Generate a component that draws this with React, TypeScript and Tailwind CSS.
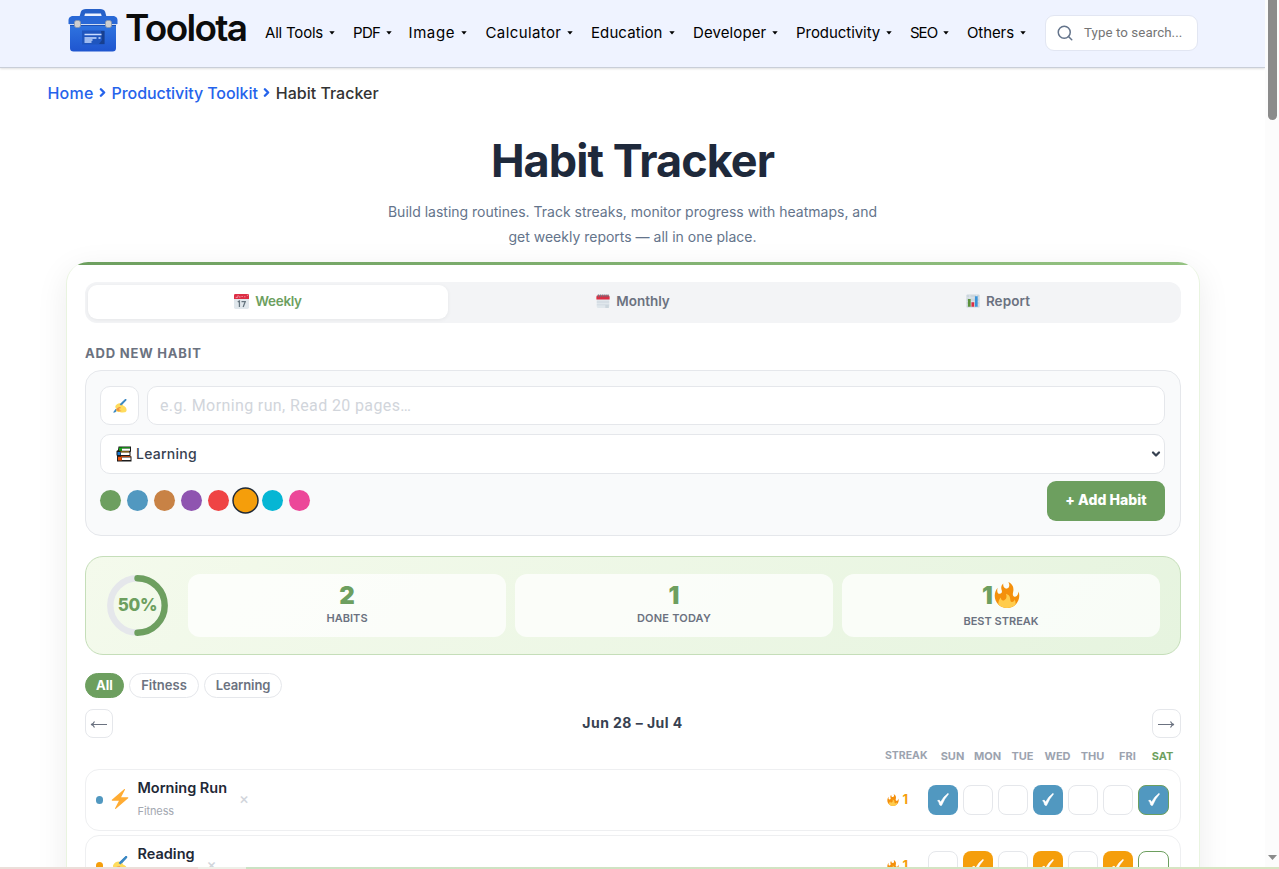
import type { ReactNode } from "react";
import { ChevronRight, ChevronDown, Search } from "lucide-react";

const Fire = ({ className }: { className: string }) => (
  <svg viewBox="0 0 36 36" className={className}>
    <path fill="#F4900C" d="M35 19c0-2.062-.367-4.039-1.04-5.868-.46 5.389-3.333 8.157-6.335 6.868-2.812-1.208-.917-5.917-.777-8.164.236-3.809-.012-8.169-6.931-11.794 2.875 5.5.333 8.917-2.333 9.125-2.958.231-5.667-2.542-4.667-7.042-3.238 2.386-3.332 6.402-2.333 9 1.042 2.708-.042 4.958-2.583 5.208-2.84.28-4.418-3.041-2.963-8.333C2.52 10.965 1 14.805 1 19c0 9.389 7.611 17 17 17s17-7.611 17-17z" />
    <path fill="#FFCC4D" d="M28.394 23.999c.148 3.084-2.561 4.293-4.019 3.709-2.106-.843-1.541-2.291-2.083-5.291s-2.625-5.083-5.708-6c2.25 6.333-1.247 8.667-3.08 9.084-1.872.426-3.753-.001-3.968-4.007C7.352 23.668 6 26.676 6 30c0 .368.023.73.055 1.09C9.125 34.124 13.342 36 18 36s8.875-1.876 11.945-4.91c.032-.36.055-.722.055-1.09 0-2.187-.584-4.236-1.606-6.001z" />
  </svg>
);

const Bolt = ({ className }: { className: string }) => (
  <svg viewBox="0 0 36 36" className={className}>
    <path fill="#FFAC33" d="M32.938 15.651C32.792 15.26 32.418 15 32 15H19.925L26.89 1.458c.219-.426.106-.947-.271-1.243C26.437.071 26.218 0 26 0c-.233 0-.466.082-.653.243L18 6.588 3.347 19.243c-.316.273-.43.714-.284 1.105S3.582 21 4 21h12.075L9.11 34.542c-.219.426-.106.947.271 1.243.182.144.401.215.619.215.233 0 .466-.082.653-.243L18 29.412l14.653-12.655c.317-.273.43-.714.285-1.106z" />
  </svg>
);

const Writing = ({ className }: { className: string }) => (
  <svg viewBox="0 0 36 36" className={className}>
    <path fill="#3B88C3" d="M7 25l5 4-7 6H0z" />
    <path fill="#3B88C3" d="M31 .5c2-1.500 4.500 1 3 3L17 22l-4-4z" />
    <path fill="#FFDC5D" d="M7 17c3-5 9-8 14-5 3 1 4 3 5 5 5 2 9 6 9 11 0 4-3 6-6 6-5 1-13 1-17-1-4-1-5-5-3-8-3-2-4-5-2-8z" />
    <path fill="#EF9645" d="M9 25c4-4 8-5 12-4-3 1-5 2-6 4 3 0 6 0 7 1-4 0-6 1-7 3 3 0 6 1 7 2-4 1-8 1-11-1-3-1-4-3-2-5z" />
    <path fill="#3B88C3" d="M31 .5c2-1.500 4.500 1 3 3L21 17l-4-3z" />
  </svg>
);

const CalendarDay = () => (
  <svg viewBox="0 0 36 36" className="size-[15px]">
    <path fill="#E0E7EC" d="M36 32a4 4 0 0 1-4 4H4a4 4 0 0 1-4-4V9h36z" />
    <path fill="#DD2E44" d="M0 12V3a3 3 0 0 1 3-3h30a3 3 0 0 1 3 3v9z" />
    <path fill="none" stroke="#F4ABBA" strokeWidth="2" d="M4 8h5l1-5M14 5v4M18 6h3M26 5v3M31 3h3" />
    <path fill="none" stroke="#66757F" strokeWidth="3" d="M9 19l4-2v14M18 18h9l-5 13" />
  </svg>
);

const CalendarPad = () => (
  <svg viewBox="0 0 36 36" className="size-[14px]">
    <path fill="#E0E7EC" d="M2 8h32v24a4 4 0 0 1-4 4H6a4 4 0 0 1-4-4z" />
    <path fill="#CCD6DD" d="M2 19h32v3H2zM2 27h32v2H2zM24 29h9v7h-9z" />
    <path fill="#DD2E44" d="M1 14V7a4 4 0 0 1 4-4h26a4 4 0 0 1 4 4v7z" />
    <path stroke="#66757F" strokeWidth="2.5" d="M6 1v7M11 1v7M16 1v7M21 1v7M26 1v7M31 1v7" />
  </svg>
);

const BarChart = () => (
  <svg viewBox="0 0 36 36" className="size-[14px]">
    <rect width="34" height="34" x="1" y="1" rx="3" fill="#CCD6DD" />
    <path stroke="#E1E8ED" strokeWidth="2" d="M1 10h34M1 19h34M1 28h34M10 1v34M27 1v34" />
    <path fill="#5C913B" d="M5 13h7v20H5z" />
    <path fill="#DD2E44" d="M14 21h7v12h-7z" />
    <path fill="#3B94D9" d="M23 6h7v27h-7z" />
  </svg>
);

const Books = () => (
  <svg viewBox="0 0 16 16" className="size-4">
    <path fill="#1b1b1b" d="M2.500.5H15v5l-.5.5v4l1 .5v5H1V10L.5 9V5l1.500-1z" />
    <path fill="#fff" d="M6 2.400h8v2.400H6zM5 6.500h8.500V9H5zM6 11.600h8.500V14H6z" />
    <path fill="#16a716" d="M3 1.500h3v3.300H3zM6 1.300h8v.9H6z" />
    <path fill="#1b78d0" d="M1.500 6h3v3h-3z" />
    <path fill="#e8a015" d="M4.500 5.400h8.500v.9H4.500z" />
    <path fill="#e8530e" d="M2 10.800h3.800v3.700H2zM5 10.300h9.500v.8H5z" />
  </svg>
);

const Toolbox = () => (
  <svg viewBox="0 0 50 44" className="h-[44px] w-[50px]">
    <defs>
      <linearGradient id="box" x1="0" y1="0" x2="0" y2="1">
        <stop offset="0" stopColor="#2f74e0" />
        <stop offset="1" stopColor="#1f55cf" />
      </linearGradient>
    </defs>
    <path fill="none" stroke="#2660c8" strokeWidth="4.500" d="M13.500 10l1.500-5.500Q15.500 3.200 18 3.200h14q2.500 0 3 1.300L36.500 10" />
    <path fill="url(#box)" d="M2 17h46v23q0 3.500-3.500 3.500h-39Q2 43.500 2 40z" />
    <path fill="#1c50b4" d="M2 15h46v3H2z" />
    <path fill="#2968d6" d="M4 8h42q3.500 1 3.500 4v4H.5v-4Q.5 9 4 8z" />
    <path stroke="#cfdcf2" strokeWidth="1" d="M1 16.500h48" />
    <rect x="6.500" y="12.500" width="6" height="7" rx="2" fill="#cfcfcf" stroke="#8995a8" strokeWidth=".8" />
    <rect x="37.500" y="12.500" width="6" height="7" rx="2" fill="#cfcfcf" stroke="#8995a8" strokeWidth=".8" />
    <path fill="#1f55be" d="M14 22.500h22.500v14H14z" />
    <path fill="#173f8f" d="M33 23h3.500v13H31l3-4z" />
    <path stroke="#c9dcff" strokeWidth="1.300" d="M16.500 26.500h17M16.500 30h12M30.500 30h2M16.500 32h8M16.500 34h7" />
  </svg>
);

const nav = [
  { label: "All Tools", cls: "w-[88px]", track: "tracking-[-0.2px]" },
  { label: "PDF", cls: "w-[55.5px]", track: "tracking-[-0.7px]" },
  { label: "Image", cls: "w-[77px]", track: "tracking-[0.6px]" },
  { label: "Calculator", cls: "w-[105.5px]", track: "tracking-[0.4px]" },
  { label: "Education", cls: "w-[102px]", track: "tracking-[0.1px]" },
  { label: "Developer", cls: "w-[103px]", track: "tracking-[0.1px]" },
  { label: "Productivity", cls: "w-[114px]", track: "tracking-[-0.05px]" },
  { label: "SEO", cls: "w-[57px]", track: "tracking-[-1px]" },
  { label: "Others", cls: "w-[78px]", track: "tracking-[-0.1px]" },
];

const colors = ["bg-[#6d9f5f]", "bg-[#5198c0]", "bg-[#c88245]", "bg-[#8f54b0]", "bg-[#ef4444]", "bg-[#f59e0b]", "bg-[#06b6d4]", "bg-[#ec4899]"];
const days = ["SUN", "MON", "TUE", "WED", "THU", "FRI", "SAT"];

function Stat({ value, label, track }: { value: ReactNode; label: string; track: string }) {
  return (
    <div className="flex h-[63px] flex-1 flex-col items-center justify-center rounded-xl bg-white/75 pb-[2px]">
      <div className="flex items-center text-[24px] leading-[26px] font-black text-[#6d9f5f]">{value}</div>
      <div className={`text-[11px] leading-[18px] font-semibold text-[#6b7280] ${track}`}>{label}</div>
    </div>
  );
}

type Habit = { name: string; tag: string; icon: ReactNode; dot: string; fill: string; done: number[] };

function HabitRow({ name, tag, icon, dot, fill, done }: Habit) {
  return (
    <div className="mb-1 flex h-[62px] shrink-0 items-center rounded-[14px] border border-[#eeeff1] bg-white pr-[11px] pl-[9.5px]">
      <span className={`size-[7.500px] rounded-full ${dot}`} />
      <span className="ml-[7px] w-[27.5px] pb-[2px]">{icon}</span>
      <div className="flex flex-col pb-[2px]">
        <span className="text-[14.500px] leading-[22px] font-semibold text-[#1f2937]">{name}</span>
        <span className="mt-[2px] text-[11px] leading-[20px] tracking-[-0.1px] text-[#a3a8b1]">{tag}</span>
      </div>
      <span className="ml-[12px] pb-[4px] text-[15px] leading-none font-medium text-[#d1d5db]">×</span>
      <span className="mr-[20px] ml-auto flex items-center gap-[3px] text-[13px] font-bold text-[#f59e0b]">
        <Fire className="size-[12px]" />1
      </span>
      <div className="flex gap-[5px]">
        {days.map((d, i) => {
          const on = done.includes(i);
          const today = i === 6;
          const border = today ? "border-[#6d9f5f]" : on ? "border-transparent" : "border-[#e5e7eb]";
          return (
            <span key={d} className={`flex h-[30px] items-center justify-center rounded-lg border pb-px ${today ? "w-[31px]" : "w-[30px]"} ${border} ${on ? fill : "bg-white"}`}>
              {on && (
                <svg viewBox="0 0 12 13" className="h-[13px] w-[12px]">
                  <path fill="#fff" stroke="#fff" strokeWidth=".5" d="M.6 7.600Q2.400 6 3.600 9 6.500 3.500 11 .3l.6.700Q7.400 5.500 4.600 12.400q-1.200.6-1.900-.5Q2 9 .6 7.600z" />
                </svg>
              )}
            </span>
          );
        })}
      </div>
    </div>
  );
}

const Arrow = ({ flip }: { flip?: boolean }) => (
  <svg viewBox="0 0 17 9" className={`mt-[2px] mr-px h-[9px] w-[17px] ${flip ? "rotate-180" : ""}`}>
    <path fill="none" stroke="#6b7280" strokeWidth="1.100" d="M1 4.500h16M4.500 1.500Q3.500 4 1 4.500 3.500 5 4.500 7.500" />
  </svg>
);

export default function App() {
  return (
    <div className="relative flex h-[869px] w-[1279px] overflow-hidden bg-white font-['Inter',sans-serif]">
      <div className="flex w-[1265px] flex-col">
        <header className="flex h-[68px] shrink-0 border-b border-[#c9ced8] bg-[#eff3ff] pl-[68px] shadow-[0_1px_2px_rgba(0,0,0,0.12)]">
          <div className="flex w-[197px] pt-[8px]">
            <Toolbox />
            <span className="ml-[7px] text-[37px] leading-[40px] font-semibold tracking-[-1.700px] text-[#0c0c0c]">Toolota</span>
          </div>
          <nav className="flex h-[66px] items-center text-[15px] text-black">
            {nav.map((n) => (
              <div key={n.label} className={`flex items-center whitespace-nowrap ${n.cls}`}>
                <span className={n.track}>{n.label}</span>
                <svg viewBox="0 0 6 4" className="ml-[6px] h-[4px] w-[6px]">
                  <path d="M.3.300h5.400L3 3.600z" />
                </svg>
              </div>
            ))}
          </nav>
          <div className="mt-[15px] flex h-[36px] w-[153px] items-center rounded-[9px] border border-[#e2e6f2] bg-white pb-px pl-[10px]">
            <Search className="size-[18px] text-[#64748b]" strokeWidth={2} />
            <span className="ml-[10px] text-[13.300px] tracking-[0.080px] text-[#757575] font-['Roboto',sans-serif]">Type to search...</span>
          </div>
        </header>

        <div className="flex h-[49px] shrink-0 items-center pl-[47.5px] text-[16px] font-medium text-[#2563eb]">
          <span className="tracking-[0.200px]">Home</span>
          <ChevronRight className="mx-[2.5px] size-[13px]" strokeWidth={4.500} />
          <span className="tracking-[-0.060px]">Productivity Toolkit</span>
          <ChevronRight className="mx-[2.5px] size-[13px]" strokeWidth={4.500} />
          <span className="text-[#333]">Habit Tracker</span>
        </div>

        <h1 className="mt-[15px] h-[58px] shrink-0 text-center text-[45px] leading-[58px] font-bold tracking-[-0.950px] text-[#1e293b]">Habit Tracker</h1>
        <p className="mt-[9px] h-[50px] shrink-0 text-center text-[14px] leading-[25px] text-[#64748b]">
          Build lasting routines. Track streaks, monitor progress with heatmaps, and
          <br />
          get weekly reports — all in one place.
        </p>

        <main className="mt-[13px] ml-[66px] flex h-[700px] w-[1134px] shrink-0 flex-col overflow-hidden rounded-[22px] border border-[#e9f4e0] border-t-0 bg-white shadow-[0_8px_32px_rgba(0,0,0,0.080)]">
          <div className="h-[3px] shrink-0 bg-linear-to-r from-[#6d9f5f] to-[#95c383]" />
          <div className="flex flex-col px-[18px] pt-[17px]">
            <div className="flex h-[41px] shrink-0 gap-[5px] rounded-xl bg-[#f3f4f6] p-[3px] pb-1 text-[13.500px] font-semibold text-[#6b7280]">
              <div className="flex flex-1 items-center justify-center gap-[6px] rounded-[9px] bg-white pb-[2px] text-[#6d9f5f] shadow-[0_1px_4px_rgba(0,0,0,0.060)]">
                <CalendarDay />
                <span className="tracking-[-0.300px]">Weekly</span>
              </div>
              <div className="flex flex-1 items-center justify-center gap-[6px] pb-[2px]">
                <CalendarPad />
                Monthly
              </div>
              <div className="flex flex-1 items-center justify-center gap-[6px] pb-[2px]">
                <BarChart />
                <span className="tracking-[0.100px]">Report</span>
              </div>
            </div>

            <h2 className="mt-[20px] h-[20px] text-[13px] leading-[20px] font-bold tracking-[0.800px] text-[#6b7280]">ADD NEW HABIT</h2>

            <section className="mt-[7px] h-[166px] rounded-[16px] border border-[#e5e7eb] bg-[#f9fafb] pt-[15px] pr-[15px] pl-[14px]">
              <div className="flex gap-2">
                <div className="flex h-[39px] w-[39px] items-center justify-center rounded-[10px] border border-[#e5e7eb] bg-white">
                  <Writing className="size-[14px]" />
                </div>
                <div className="flex flex-1 items-center rounded-[10px] border border-[#e5e7eb] bg-white pl-3 text-[16px] tracking-[0.380px] text-[#d1d5db] font-['Roboto',sans-serif]">e.g. Morning run, Read 20 pages…</div>
              </div>
              <div className="mt-[9px] flex h-[40px] items-center rounded-[10px] border border-[#e5e7eb] bg-white pr-[2px] pb-px pl-[15px] text-[14px] font-medium text-[#374151]">
                <Books />
                <span className="ml-[4px] tracking-[0.250px]">Learning</span>
                <ChevronDown className="ml-auto size-[12px] text-[#374151]" strokeWidth={4.500} />
              </div>
              <div className="mt-[7px] flex h-[40px] items-center justify-between">
                <div className="flex items-center gap-[6px] pb-px">
                  {colors.map((c, i) => (
                    <span key={c} className={`size-[21px] rounded-full ${c} ${i === 5 ? "scale-[1.120] ring-[1.300px] ring-[#1f2937]" : ""}`} />
                  ))}
                </div>
                <div className="flex h-[40px] w-[118px] items-center justify-center rounded-[9px] bg-[#6d9f5f] pb-[3px] text-[14px] font-extrabold tracking-[0.050px] text-white">+ Add Habit</div>
              </div>
            </section>

            <section className="mt-5 flex h-[99px] items-center gap-[9px] rounded-[18px] border border-[#c5deb9] bg-linear-135 from-[#f4faec] to-[#e6f4df] pr-5 pl-[21px]">
              <div className="relative mr-[11px] flex size-[61px] items-center justify-center">
                <svg viewBox="0 0 61 61" className="absolute inset-0 size-[61px]">
                  <circle cx="30.500" cy="30.500" r="27.200" fill="none" stroke="#e5e7eb" strokeWidth="6.400" />
                  <path d="M30.500 3.300a27.200 27.200 0 0 1 0 54.400" fill="none" stroke="#6d9f5f" strokeWidth="6.400" strokeLinecap="round" />
                </svg>
                <span className="relative text-[17px] font-extrabold tracking-[-0.300px] text-[#6d9f5f]">50%</span>
              </div>
              <Stat value="2" label="HABITS" track="tracking-[0.050px]" />
              <Stat value="1" label="DONE TODAY" track="tracking-[0.200px]" />
              <Stat value={<>1<Fire className="mb-[2px] ml-[1px] size-[26px]" /></>} label="BEST STREAK" track="relative top-[2px]" />
            </section>

            <div className="mt-[18px] flex h-[25px] gap-[5px] text-[13px] leading-[22px] font-semibold text-[#6b7280]">
              <span className="w-[39px] rounded-full border border-[#6d9f5f] bg-[#6d9f5f] text-center font-bold text-white">All</span>
              <span className="w-[70px] rounded-full border border-[#e5e7eb] text-center">Fitness</span>
              <span className="w-[78px] rounded-full border border-[#e5e7eb] text-center tracking-[-0.100px]">Learning</span>
            </div>

            <div className="mt-[11px] flex h-[29px] items-center justify-between">
              <span className="flex h-[29px] w-[28px] items-center justify-center rounded-lg border border-[#e5e7eb]"><Arrow /></span>
              <span className="pb-[2px] text-[14px] font-bold tracking-[0.450px] text-[#374151]">Jun 28 – Jul 4</span>
              <span className="flex h-[29px] w-[29px] items-center justify-center rounded-lg border border-[#e5e7eb]"><Arrow flip /></span>
            </div>

            <div className="mt-[9px] flex h-[18px] items-center justify-end pr-px text-[11px] font-bold text-[#9ca3af]">
              <span className="mr-[7.5px] text-[10.500px]">STREAK</span>
              {days.map((d) => (
                <span key={d} className={`w-[35px] text-center ${d === "SAT" ? "text-[#6d9f5f]" : ""}`}>{d}</span>
              ))}
            </div>

            <div className="mt-[4px] flex flex-col">
              <HabitRow name="Morning Run" tag="Fitness" icon={<Bolt className="size-[20px]" />} dot="bg-[#5198c0]" fill="bg-[#5198c0]" done={[0, 3, 6]} />
              <HabitRow name="Reading" tag="Learning" icon={<Writing className="size-[18px]" />} dot="bg-[#f59e0b]" fill="bg-[#f59e0b]" done={[1, 3, 5]} />
            </div>
          </div>
        </main>
      </div>

      <aside className="flex w-[14px] flex-col items-center justify-between bg-[#fcfcfc]">
        <div className="h-[120px] w-[9px] rounded-b-full bg-[#8b8b8b]" />
        <svg viewBox="0 0 9 5" className="mb-[9px] h-[5px] w-[9px]">
          <path fill="#8b8b8b" d="M0 0h9L4.500 5z" />
        </svg>
      </aside>

      <div className="absolute bottom-0 left-0 flex h-[2px] w-full">
        <div className="w-[198px] bg-[#ebdfda]" />
        <div className="w-[48px] bg-[#eef0e8]" />
        <div className="flex-1 bg-linear-to-r from-[#cbe2c4] to-[#d8e5c3]" />
      </div>
    </div>
  );
}
